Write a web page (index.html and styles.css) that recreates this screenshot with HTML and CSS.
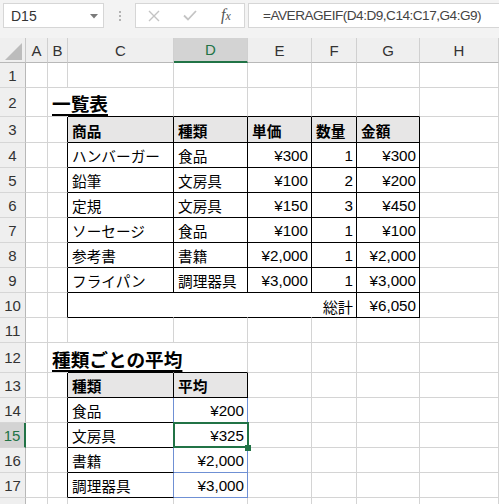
FILE: index.html
```html
<!DOCTYPE html>
<html lang="ja">
<head>
<meta charset="utf-8">
<title>Sheet</title>
<link rel="stylesheet" href="styles.css">
</head>
<body>
<div class="bar">
  <div class="namebox"><span>D15</span><svg class="dd" width="8" height="5" viewBox="0 0 8 5"><polygon points="0,0 8,0 4,4.5" fill="#7a7a7a"/></svg></div>
  <div class="dots"><i></i><i></i><i></i></div>
  <div class="btns">
    <div class="slot"><svg width="12" height="12" viewBox="0 0 12 12"><path d="M1 1 L11 11 M11 1 L1 11" stroke="#c4c4c4" stroke-width="1.4" fill="none"/></svg></div>
    <div class="slot"><svg width="14" height="11" viewBox="0 0 14 11"><path d="M1 5.5 L5 9.5 L13 1" stroke="#c4c4c4" stroke-width="1.8" fill="none"/></svg></div>
    <div class="slot fx"><span class="f">f</span><span class="x">x</span></div>
  </div>
  <div class="formula">=AVERAGEIF(D4:D9,C14:C17,G4:G9)</div>
</div>

<div class="sheet">
  <div class="cn"><svg width="26" height="25" viewBox="0 0 26 25"><polygon points="5,22 22,22 22,5" fill="#bcbcbc"/></svg></div>
  <div class="ch">A</div><div class="ch">B</div><div class="ch">C</div><div class="ch sel">D</div><div class="ch">E</div><div class="ch">F</div><div class="ch">G</div><div class="ch">H</div>

  <div class="rh">1</div>
  <div class="c"></div><div class="c"></div><div class="c"></div><div class="c"></div><div class="c"></div><div class="c"></div><div class="c"></div><div class="c"></div>

  <div class="rh">2</div>
  <div class="c"></div><div class="c nr"><span class="t">一覧表</span></div><div class="c bB"></div><div class="c bB"></div><div class="c bB"></div><div class="c bB"></div><div class="c bB"></div><div class="c"></div>

  <div class="rh">3</div>
  <div class="c"></div><div class="c bR"></div><div class="c tb th">商品</div><div class="c tb th">種類</div><div class="c tb th">単価</div><div class="c tb th">数量</div><div class="c tb th">金額</div><div class="c"></div>

  <div class="rh">4</div>
  <div class="c"></div><div class="c bR"></div><div class="c tb">ハンバーガー</div><div class="c tb">食品</div><div class="c tb r">¥300</div><div class="c tb r">1</div><div class="c tb r">¥300</div><div class="c"></div>

  <div class="rh">5</div>
  <div class="c"></div><div class="c bR"></div><div class="c tb">鉛筆</div><div class="c tb">文房具</div><div class="c tb r">¥100</div><div class="c tb r">2</div><div class="c tb r">¥200</div><div class="c"></div>

  <div class="rh">6</div>
  <div class="c"></div><div class="c bR"></div><div class="c tb">定規</div><div class="c tb">文房具</div><div class="c tb r">¥150</div><div class="c tb r">3</div><div class="c tb r">¥450</div><div class="c"></div>

  <div class="rh">7</div>
  <div class="c"></div><div class="c bR"></div><div class="c tb">ソーセージ</div><div class="c tb">食品</div><div class="c tb r">¥100</div><div class="c tb r">1</div><div class="c tb r">¥100</div><div class="c"></div>

  <div class="rh">8</div>
  <div class="c"></div><div class="c bR"></div><div class="c tb">参考書</div><div class="c tb">書籍</div><div class="c tb r">¥2,000</div><div class="c tb r">1</div><div class="c tb r">¥2,000</div><div class="c"></div>

  <div class="rh">9</div>
  <div class="c"></div><div class="c bR"></div><div class="c tb">フライパン</div><div class="c tb">調理器具</div><div class="c tb r">¥3,000</div><div class="c tb r">1</div><div class="c tb r">¥3,000</div><div class="c"></div>

  <div class="rh">10</div>
  <div class="c"></div><div class="c bR"></div><div class="c bB nr"></div><div class="c bB nr"></div><div class="c bB nr"></div><div class="c tb r">総計</div><div class="c tb r">¥6,050</div><div class="c"></div>

  <div class="rh">11</div>
  <div class="c"></div><div class="c"></div><div class="c"></div><div class="c"></div><div class="c"></div><div class="c"></div><div class="c"></div><div class="c"></div>

  <div class="rh">12</div>
  <div class="c"></div><div class="c nr"><span class="t">種類ごとの平均</span></div><div class="c bB nr"></div><div class="c bB"></div><div class="c"></div><div class="c"></div><div class="c"></div><div class="c"></div>

  <div class="rh">13</div>
  <div class="c"></div><div class="c bR"></div><div class="c tb th">種類</div><div class="c tb th">平均</div><div class="c"></div><div class="c"></div><div class="c"></div><div class="c"></div>

  <div class="rh">14</div>
  <div class="c"></div><div class="c bR"></div><div class="c tb blR">食品</div><div class="c blR blB r">¥200</div><div class="c"></div><div class="c"></div><div class="c"></div><div class="c"></div>

  <div class="rh sel">15</div>
  <div class="c"></div><div class="c bR"></div><div class="c tb blR">文房具</div><div class="c blR blB r act">¥325</div><div class="c"></div><div class="c"></div><div class="c"></div><div class="c"></div>

  <div class="rh">16</div>
  <div class="c"></div><div class="c bR"></div><div class="c tb blR">書籍</div><div class="c blR blB r">¥2,000</div><div class="c"></div><div class="c"></div><div class="c"></div><div class="c"></div>

  <div class="rh">17</div>
  <div class="c"></div><div class="c bR"></div><div class="c tb blR">調理器具</div><div class="c blR blB r">¥3,000</div><div class="c"></div><div class="c"></div><div class="c"></div><div class="c"></div>

  <div class="rh"></div>
  <div class="c"></div><div class="c"></div><div class="c"></div><div class="c"></div><div class="c"></div><div class="c"></div><div class="c"></div><div class="c"></div>
</div>
</body>
</html>
```

FILE: styles.css
```css
html, body {
  margin: 0;
  padding: 0;
}
body {
  width: 499px;
  height: 504px;
  overflow: hidden;
  background: #ffffff;
  font-family: "Liberation Sans", "Noto Sans CJK JP", sans-serif;
  color: #000;
}

/* formula bar */
.bar {
  height: 38px;
  box-sizing: border-box;
  padding-top: 3px;
  background: #f3f3f3;
  display: flex;
  align-items: flex-start;
}
.namebox {
  flex: 0 0 101px;
  margin-left: 3px;
  height: 25px;
  box-sizing: border-box;
  border: 1px solid #d6d6d6;
  background: #fff;
  display: flex;
  align-items: center;
  justify-content: space-between;
  padding: 0 5px 0 7px;
  font-size: 14px;
  color: #333;
}
.dd { margin-top: 1px; }
.dots {
  flex: 0 0 31px;
  height: 25px;
  display: flex;
  flex-direction: column;
  align-items: center;
  justify-content: center;
  gap: 2px;
}
.dots i {
  display: block;
  width: 2px;
  height: 2px;
  background: #b3b3b3;
}
.btns {
  flex: 0 0 110px;
  height: 25px;
  box-sizing: border-box;
  border: 1px solid #d6d6d6;
  background: #fff;
  display: flex;
}
.slot {
  width: 36px;
  display: flex;
  align-items: center;
  justify-content: center;
}
.fx {
  font-family: "Liberation Serif", serif;
  font-style: italic;
  color: #555;
  align-items: baseline;
  padding-top: 2px;
  box-sizing: border-box;
}
.fx .f { font-size: 16px; }
.fx .x { font-size: 12px; }
.formula {
  margin-left: 3px;
  flex: 1 1 auto;
  min-width: 0;
  height: 25px;
  box-sizing: border-box;
  border: 1px solid #d6d6d6;
  border-right: none;
  background: #fff;
  padding-left: 14px;
  display: flex;
  align-items: center;
  font-size: 13.6px;
  letter-spacing: -0.5px;
  color: #444;
  white-space: nowrap;
  overflow: hidden;
}

/* sheet grid */
.sheet {
  display: grid;
  grid-template-columns: 26px 22px 20px 106px 74px 64px 45px 63px 79px;
  grid-template-rows: 25px 25px 29px 26px repeat(7, 25px) 25px 30px repeat(6, 25px);
}
.cn {
  background: #efefef;
  border-right: 1px solid #c8c8c8;
  border-bottom: 1px solid #b8b8b8;
  box-sizing: border-box;
  overflow: hidden;
}
.cn svg { display: block; }
.ch {
  background: #efefef;
  border-right: 1px solid #d0d0d0;
  border-bottom: 1px solid #b8b8b8;
  box-sizing: border-box;
  display: flex;
  align-items: center;
  justify-content: center;
  font-size: 15px;
  color: #333;
}
.ch.sel {
  background: #d3d3d3;
  color: #217346;
  border-bottom: 2px solid #217346;
}
.rh {
  background: #efefef;
  border-right: 1px solid #b8b8b8;
  border-bottom: 1px solid #d6d6d6;
  box-sizing: border-box;
  display: flex;
  align-items: center;
  justify-content: center;
  font-size: 15px;
  color: #333;
}
.rh.sel {
  background: #d3d3d3;
  color: #217346;
  border-right: 2px solid #217346;
}
.c {
  border-right: 1px solid #d4d4d4;
  border-bottom: 1px solid #d4d4d4;
  box-sizing: border-box;
  display: flex;
  align-items: center;
  padding: 1px 3px 0 4px;
  font-size: 14.67px;
  white-space: nowrap;
  min-width: 0;
}
.c.r { justify-content: flex-end; font-size: 15.2px; }
.c.nr { border-right-color: transparent; }
.c.bR { border-right-color: #000; }
.c.bB { border-bottom-color: #000; }
.c.tb { border-right-color: #000; border-bottom-color: #000; }
.c.th { background: #e7e6e6; font-weight: bold; }
.c.blR { border-right-color: #6f90d4; }
.c.blB { border-bottom-color: #6f90d4; }
.t {
  font-size: 18.67px;
  font-weight: bold;
  text-decoration: underline;
  text-decoration-thickness: 1.5px;
  text-underline-offset: 3px;
}
.act { position: relative; }
.act::after {
  content: "";
  position: absolute;
  left: -1px;
  top: -1px;
  right: -2px;
  bottom: -1px;
  border: 2px solid #217346;
}
.act::before {
  content: "";
  position: absolute;
  right: -4px;
  bottom: -4px;
  width: 6px;
  height: 6px;
  background: #217346;
  z-index: 1;
}
```
